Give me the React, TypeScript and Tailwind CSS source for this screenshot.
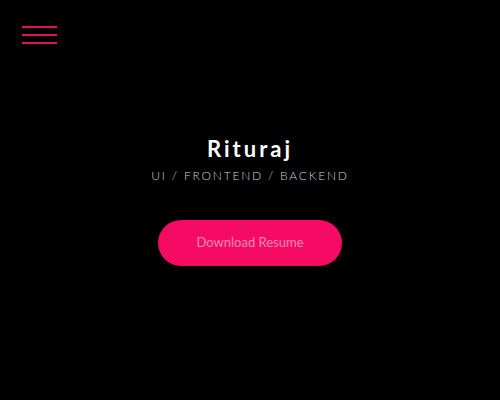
export default function App() {
  return (
    <div className="w-[500px] h-[400px] bg-black relative overflow-hidden" style={{ fontFamily: "Lato, 'Open Sans', sans-serif" }}>
      <div className="absolute left-[22px] top-[26px] flex flex-col gap-[6px]">
        <div className="w-[35px] h-[2px] bg-[#e0115f]" />
        <div className="w-[35px] h-[2px] bg-[#e0115f]" />
        <div className="w-[35px] h-[2px] bg-[#e0115f]" />
      </div>
      <div className="flex flex-col items-center pt-[134px]">
        <h1 className="text-[22px] leading-[30px] font-bold text-white tracking-[3px]">Rituraj</h1>
        <p className="mt-[4px] text-[12px] leading-[16px] font-light text-[#d0d0d0] tracking-[1.8px]">UI / FRONTEND / BACKEND</p>
        <button className="mt-[36px] w-[184px] h-[46px] rounded-full bg-[#f50a64] text-[#f98ab8] text-[13px] font-normal">Download Resume</button>
      </div>
    </div>
  );
}
